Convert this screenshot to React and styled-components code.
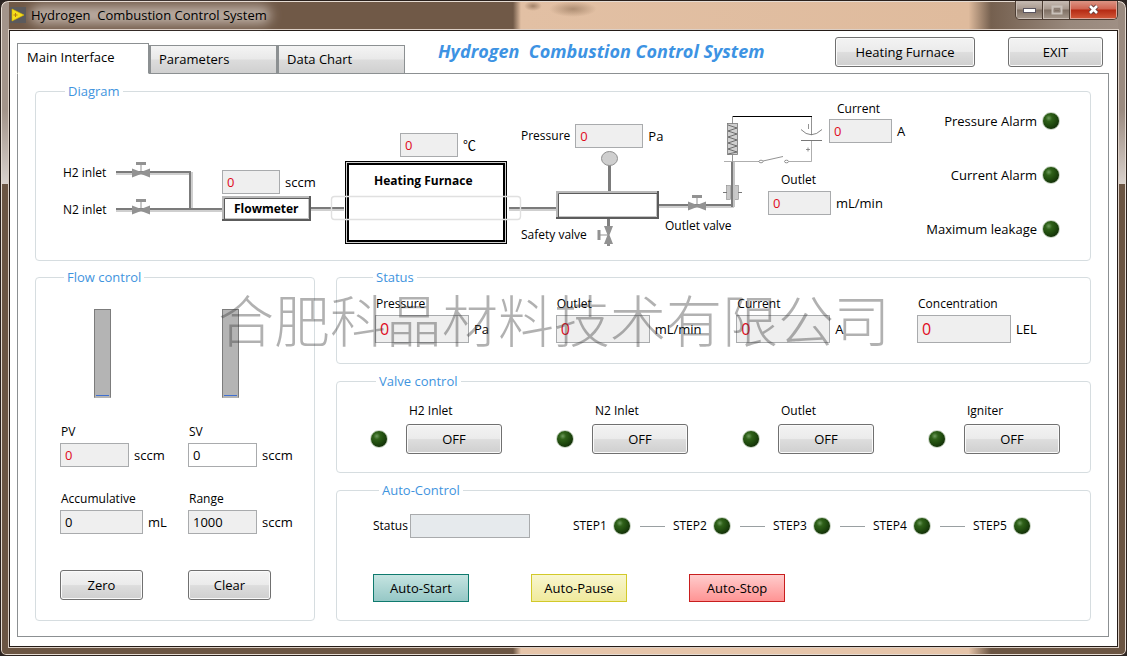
import React, { useState } from "react";
import styled, { createGlobalStyle, css } from "styled-components";

const GlobalStyle = createGlobalStyle`
  *, *::before, *::after { box-sizing: border-box; }
  body {
    margin: 0;
    background: #2b2422;
    color: #000;
    font-family: "Open Sans", "Noto Sans CJK SC", sans-serif;
    font-size: 13px;
    line-height: 18px;
  }
  button, input { font: inherit; color: inherit; }
`;

/* ---------- window frame ---------- */

const Frame = styled.div`
  display: flex;
  flex-direction: column;
  min-width: 1127px;
  min-height: 100vh;
  padding: 0 8px 8px;
  border: 1px solid #2a211d;
  border-radius: 8px 8px 6px 6px;
  box-shadow: inset 0 0 0 1px #e6dcd3;
  background:
    radial-gradient(ellipse at center, rgba(120, 90, 66, 0.6), transparent 70%) 523px 0 / 18px 10px no-repeat,
    radial-gradient(ellipse at center, rgba(130, 100, 74, 0.55), transparent 70%) 548px 0 / 48px 16px no-repeat,
    linear-gradient(#a3948a, #a3948a 60%, #d9d1cc) 0 0 / 8px 183px no-repeat,
    linear-gradient(#9b8b80, #9b8b80 60%, #d9d1cc) 100% 0 / 8px 183px no-repeat,
    linear-gradient(90deg, #705947 0, #705947 512px, #e2c0a4 520px, #dfbb9d 86%, #75604f 88%, #98887c 95%, #a09085) 0 0 / 100% 30px no-repeat,
    linear-gradient(90deg, #6b5543 0, #6b5543 512px, #e6c5aa 520px, #e6c5aa 86%, #6b5543 88%);
`;

const TitleBar = styled.header`
  display: flex;
  align-items: flex-start;
  justify-content: space-between;
  height: 29px;
`;

const WindowTitle = styled.h1`
  position: relative;
  display: flex;
  align-items: center;
  gap: 5px;
  margin: 5px 0 0 1px;
  font-size: 13px;
  font-weight: 400;
  line-height: 18px;
  white-space: pre;
  isolation: isolate;
  &::before {
    content: "";
    position: absolute;
    inset: 0 -4px 0 20px;
    z-index: -1;
    border-radius: 9px;
    background: rgba(235, 228, 222, 0.62);
    filter: blur(6px);
  }
`;

const WindowButtons = styled.div`
  display: flex;
  border: 1px solid #4c3d33;
  border-top: 0;
  border-radius: 0 0 5px 5px;
  overflow: hidden;
`;

const WindowButton = styled.button`
  display: flex;
  align-items: center;
  justify-content: center;
  width: ${(p) => (p.$close ? 47 : 27)}px;
  height: 18px;
  padding: 0;
  border: 1px solid ${(p) => (p.$close ? "#e0a598" : "#cbbfb6")};
  border-top: 0;
  background: ${(p) =>
    p.$close
      ? "linear-gradient(#dc9484, #cf6350 48%, #b42913 52%, #cf5436)"
      : "linear-gradient(#c6bbb3, #a7988d 48%, #7f6f63 52%, #a29488)"};
  & + & { box-shadow: -1px 0 0 #4c3d33; }
`;

const Client = styled.main`
  display: flex;
  flex: 1;
  flex-direction: column;
  padding: 0 8px 9px 7px;
  border: 1px solid #241b17;
  outline: 1px solid #dccfc5;
  background: #fff;
`;

/* ---------- header with tabs ---------- */

const TopRow = styled.div`
  display: flex;
  align-items: center;
  height: 42px;
  padding-right: 6px;
`;

const TabList = styled.div`
  display: flex;
  align-items: flex-end;
  align-self: flex-end;
  margin-bottom: -1px;
`;

const Tab = styled.button`
  position: relative;
  width: 128px;
  height: 29px;
  padding: 0 8px 2px;
  border: 1px solid #8c9092;
  background: linear-gradient(#f4f4f4, #e9e9e9 48%, #dcdcdc 52%, #d0d0d0);
  text-align: left;
  & + & { border-left-width: 2px; }
  ${(p) =>
    p.$active &&
    css`
      width: 132px;
      height: 31px;
      padding: 0 9px 4px;
      border-bottom-color: #fff;
      background: #fff;
    `}
`;

const Heading = styled.h2`
  flex: 1;
  margin: 0 0 2px 33px;
  color: #3d93e3;
  font-size: 18px;
  font-style: italic;
  font-weight: 700;
  line-height: 24px;
  white-space: pre;
`;

const TopButtons = styled.div`
  display: flex;
  gap: 33px;
`;

const Button = styled.button`
  width: ${(p) => p.$width}px;
  height: 30px;
  padding: 0;
  border: 1px solid #707070;
  border-radius: 3px;
  box-shadow: inset 0 0 0 1px #fafafa;
  background: linear-gradient(#f3f3f3, #ebebeb 48%, #dddddd 52%, #cfcfcf);
`;

/* ---------- panels ---------- */

const Page = styled.section`
  display: flex;
  flex: 1;
  flex-direction: column;
  gap: 7px;
  padding: 8px 17px 15px;
  border: 1px solid #8c9092;
`;

const Group = styled.fieldset`
  min-width: 0;
  margin: 0;
  padding: 0;
  border: 1px solid #d6dde0;
  border-radius: 4px;
`;

const GroupTitle = styled.legend`
  margin-left: ${(p) => p.$indent}px;
  padding: 0 3px;
  color: #3f94de;
  line-height: 18px;
`;

const Panels = styled.div`
  position: relative;
  display: grid;
  grid-template-columns: 280fr 755fr;
  gap: 21px;
`;

const PanelStack = styled.div`
  display: flex;
  flex-direction: column;
  gap: 8px;
`;

const Watermark = styled.div`
  position: absolute;
  top: 20px;
  left: 183px;
  color: rgba(60, 60, 60, 0.4);
  font-family: "Noto Sans CJK SC", sans-serif;
  font-size: 56px;
  font-weight: 300;
  line-height: 60px;
  white-space: nowrap;
  pointer-events: none;
`;

const ValueBox = styled.input`
  width: ${(p) => p.$width}px;
  height: ${(p) => (p.$large ? 28 : 24)}px;
  padding: 0 0 0 4px;
  border: 1px solid #a9abad;
  border-radius: 0;
  outline: 0;
  background: ${(p) => p.$fill || "#efefef"};
  color: ${(p) => (p.$red ? "#e00b1c" : "#000")};
  font-size: ${(p) => (p.$large ? 16 : 13)}px;
`;

const FieldBlock = styled.div`
  display: flex;
  flex-direction: column;
  gap: 2px;
`;

const FieldLine = styled.div`
  display: flex;
  align-items: center;
  gap: 5px;
`;

const FieldLabel = styled.label`
  padding-left: 1px;
  font-size: 12px;
  white-space: nowrap;
`;

const Led = styled.span`
  flex: none;
  width: 18px;
  height: 18px;
  border: 1px solid #c9d5c4;
  border-radius: 50%;
  background: radial-gradient(circle at 36% 32%, #6d9a5c 0, #2f6119 22%, #1f4a0e 50%, #0f2706 85%);
`;

/* ---------- diagram ---------- */

const DiagramBody = styled.div`
  display: flex;
  justify-content: space-between;
`;

const Stage = styled.div`
  position: relative;
  flex: 1;
  height: 160px;
`;

const Drawing = styled.svg`
  position: absolute;
  top: 0;
  left: 0;
`;

const Node = styled.div`
  position: absolute;
  left: ${(p) => p.$x - 36}px;
  top: ${(p) => p.$y - 100}px;
  display: flex;
  align-items: center;
  gap: 5px;
  font-size: 12px;
  font-weight: ${(p) => (p.$bold ? 700 : 400)};
  white-space: nowrap;
`;

const Unit = styled.span`
  font-size: 13px;
`;

const AlarmList = styled.ul`
  display: flex;
  flex-direction: column;
  gap: 36px;
  margin: 0;
  padding: 12px 30px 0 0;
  list-style: none;
`;

const Alarm = styled.li`
  display: flex;
  align-items: center;
  justify-content: flex-end;
  gap: 5px;
`;

/* ---------- flow control ---------- */

const FlowBody = styled.div`
  display: flex;
  flex-direction: column;
  padding: 23px 0 20px 24px;
`;

const PairRow = styled.div`
  display: grid;
  grid-template-columns: 128px 1fr;
  margin-top: ${(p) => p.$space || 0}px;
`;

const Gauge = styled.div`
  display: flex;
  align-items: flex-end;
  width: 17px;
  height: 89px;
  margin-left: 34px;
  padding: 0 1px 1px;
  border: 1px solid #7c7c7c;
  border-bottom-color: #b4b4b4;
  background: #b4b4b4;
`;

const GaugeLevel = styled.span`
  flex: 1;
  height: 1px;
  background: #3f6fd0;
`;

/* ---------- status, valves, automation ---------- */

const StatusBody = styled.div`
  display: grid;
  grid-template-columns: 1fr 1fr 1fr 122px;
  padding: 9px 51px 20px 38px;
`;

const ValveBody = styled.div`
  display: grid;
  grid-template-columns: 1fr 1fr 1fr 132px;
  padding: 12px 30px 18px 33px;
`;

const ValveItem = styled.div`
  display: grid;
  grid-template-columns: 18px 96px;
  align-items: center;
  gap: 4px 18px;
`;

const ValveName = styled.span`
  grid-column: 2;
  padding-left: 3px;
  font-size: 12px;
`;

const AutoBody = styled.div`
  display: flex;
  flex-direction: column;
  gap: 36px;
  padding: 15px 36px 18px;
`;

const AutoRow = styled.div`
  display: flex;
  align-items: center;
  gap: ${(p) => p.$gap}px;
`;

const AutoLabel = styled.label`
  font-size: 12px;
`;

const Steps = styled.ol`
  display: flex;
  margin: 0 0 0 41px;
  padding: 0;
  list-style: none;
`;

const Step = styled.li`
  display: flex;
  align-items: center;
  gap: 4px;
  &:not(:last-child) { width: 100px; }
  &:not(:last-child)::after {
    content: "";
    width: 25px;
    height: 1px;
    margin-left: 5px;
    background: #9aa0a2;
  }
`;

const StepName = styled.span`
  width: 36px;
  font-size: 12px;
`;

const autoTones = {
  start: ["#0f7a6e", "#c5e4e1", "#96c8c6"],
  pause: ["#d2c92a", "#f8f6cf", "#f0ea9c"],
  stop: ["#c81e1e", "#ffcccc", "#ff9494"],
};

const AutoButton = styled.button`
  width: 96px;
  height: 28px;
  padding: 0;
  border: 1px solid ${(p) => autoTones[p.$tone][0]};
  background: linear-gradient(${(p) => autoTones[p.$tone][1]}, ${(p) => autoTones[p.$tone][2]});
`;

/* ---------- pieces ---------- */

function AppIcon() {
  return (
    <svg width="16" height="16" viewBox="0 0 16 16" aria-hidden="true">
      <rect width="16" height="16" fill="#5b5a5c" />
      <path d="M2 2 L14 8 L2 14 Z" fill="#f5df1c" stroke="#d9b400" strokeWidth="0.6" />
      <path d="M3.5 8 h4 M5.5 6 v4" stroke="#b67a12" strokeWidth="1" />
    </svg>
  );
}

function Pipe({ x1, x2, y }) {
  return (
    <g>
      <rect x={x1} y={y} width={x2 - x1} height="2" fill="#7b7b7b" />
      <rect x={x1} y={y + 2} width={x2 - x1} height="2" fill="#cfcfcf" />
    </g>
  );
}

function Valve({ x, y, turn = 0 }) {
  return (
    <g transform={`translate(${x} ${y}) rotate(${turn})`} fill="#929292">
      <path d="M-9 -4.5 L0 -1 L9 -4.5 V4.5 L0 1 L-9 4.5 Z" />
      <rect x="-0.5" y="-9" width="1" height="9" />
      <rect x="-5" y="-11" width="10" height="3" />
    </g>
  );
}

function BeveledBox({ x, y, width, height }) {
  const r = x + width;
  const b = y + height;
  return (
    <g fill="none">
      <rect x={x} y={y} width={width} height={height} fill="#fff" />
      <path d={`M${x + 1} ${b} V${y + 1} H${r}`} stroke="#b9b9b9" strokeWidth="2" />
      <path d={`M${x} ${b - 1} H${r - 1} V${y}`} stroke="#5c5c5c" strokeWidth="2" />
      <path d={`M${x + 2.5} ${b - 2} V${y + 2.5} H${r - 2}`} stroke="#5c5c5c" />
      <path d={`M${x + 3} ${b - 2.5} H${r - 2.5} V${y + 3}`} stroke="#c4c4c4" />
    </g>
  );
}

function Plumbing() {
  return (
    <Drawing width="890" height="160" viewBox="36 100 890 160" aria-hidden="true">
      <Pipe x1={116} x2={191} y={171} />
      <Pipe x1={116} x2={222} y={208} />
      <rect x="189" y="171" width="2" height="38" fill="#7b7b7b" />
      <rect x="191" y="172" width="2" height="36" fill="#cfcfcf" />
      <Valve x={141} y={173} />
      <Valve x={141} y={210} />
      <BeveledBox x={222} y={196} width={89} height={25} />
      <Pipe x1={311} x2={344} y={207} />

      <rect x="345.5" y="161.5" width="161" height="82" fill="#fff" stroke="#000" />
      <rect x="346.5" y="162.5" width="159" height="80" fill="none" stroke="#d0d0d0" />
      <rect x="348" y="164" width="156" height="77" fill="none" stroke="#000" strokeWidth="2" />
      <Pipe x1={509} x2={556} y={207} />
      <rect x="331.5" y="196.5" width="189" height="23" rx="3" fill="none" stroke="#e0e0e0" strokeWidth="1.4" />

      <rect x="608" y="165" width="3" height="27" fill="#7b7b7b" />
      <ellipse cx="609.5" cy="158.5" rx="8" ry="7" fill="#cfcfcf" stroke="#8f8f8f" />
      <BeveledBox x={556} y={191} width={103} height={28} />
      <rect x="607" y="219" width="3" height="9" fill="#7f7f7f" />
      <rect x="607" y="242" width="3" height="4" fill="#8c8c8c" />
      <Valve x={608.5} y={235} turn={-90} />

      <Pipe x1={659} x2={734} y={204} />
      <Valve x={697} y={206} />
      <g fill="#c9c9c9" stroke="#8b8b8b" strokeWidth="0.6">
        <rect x="726.5" y="185.5" width="4" height="14" />
        <rect x="734.5" y="185.5" width="4" height="14" />
      </g>
      <path d="M723 192.5 h4 M738 192.5 h4" stroke="#777" />
      <rect x="731" y="162" width="2" height="45" fill="#7b7b7b" />
      <rect x="733" y="162" width="2" height="45" fill="#c4c4c4" />

      <g fill="none" stroke="#777" strokeWidth="0.8">
        <path d="M732.5 116 V124 M732.5 155 V162" />
        <rect x="727.5" y="123.5" width="10" height="31" fill="#cfcfcf" />
        <path d="M728 125 L737 128 L728 131 L737 134 L728 137 L737 140 L728 143 L737 146 L728 149 L737 152 L728 154" stroke="#555" />
        <path d="M724 161.5 H759" stroke="#999" />
        <ellipse cx="761" cy="161.5" rx="2" ry="1.3" />
        <ellipse cx="786.5" cy="161.5" rx="2" ry="1.3" />
        <path d="M763 161 L783 156.5" />
        <path d="M789 161.5 H811.5 V141" stroke="#999" />
        <path d="M811.5 116 V135" />
        <path d="M801 129.5 Q811 140 822 129.5" stroke="#666" />
        <path d="M801 140.5 H822" stroke="#555" />
        <path d="M806 149.5 h4 M808 147.5 v4 M808.5 124 v5" />
      </g>
      <path d="M733 116.5 H812" stroke="#000" />
    </Drawing>
  );
}

function Reading({ x, y, id, name, width, unit, lead }) {
  return (
    <Node $x={x} $y={y}>
      {lead && <label htmlFor={id}>{lead}</label>}
      <ValueBox id={id} aria-label={lead ? undefined : name} $width={width} $red defaultValue="0" readOnly />
      <Unit>{unit}</Unit>
    </Node>
  );
}

function Field({ id, label, unit, value = "0", width, red, fill, large, editable }) {
  return (
    <FieldBlock>
      <FieldLabel htmlFor={id}>{label}</FieldLabel>
      <FieldLine>
        <ValueBox id={id} $width={width} $red={red} $fill={fill} $large={large} defaultValue={value} readOnly={!editable} />
        <Unit>{unit}</Unit>
      </FieldLine>
    </FieldBlock>
  );
}

const tabs = ["Main Interface", "Parameters", "Data Chart"];
const alarms = ["Pressure Alarm", "Current Alarm", "Maximum leakage"];
const valves = ["H2 Inlet", "N2 Inlet", "Outlet", "Igniter"];
const steps = ["STEP1", "STEP2", "STEP3", "STEP4", "STEP5"];
const readings = [
  ["Pressure", "Pa"],
  ["Outlet", "mL/min"],
  ["Current", "A"],
  ["Concentration", "LEL"],
];

export default function App() {
  const [open, setOpen] = useState({});

  return (
    <>
      <GlobalStyle />
      <Frame>
        <TitleBar>
          <WindowTitle>
            <AppIcon />
            {"Hydrogen  Combustion Control System"}
          </WindowTitle>
          <WindowButtons>
            <WindowButton aria-label="Minimize">
              <svg width="13" height="6" viewBox="0 0 13 6">
                <rect x="0.5" y="1.5" width="12" height="4" fill="#fff" stroke="#5a5560" />
              </svg>
            </WindowButton>
            <WindowButton aria-label="Maximize">
              <svg width="12" height="10" viewBox="0 0 12 10">
                <rect x="1.5" y="1.5" width="9" height="7" fill="none" stroke="#c9c1ba" strokeWidth="2" />
                <rect x="3.5" y="3.5" width="5" height="3" fill="none" stroke="#8d8076" />
              </svg>
            </WindowButton>
            <WindowButton $close aria-label="Close">
              <svg width="13" height="11" viewBox="0 0 13 11">
                <path d="M3 2 L10 9 M10 2 L3 9" stroke="#5d3a3a" strokeWidth="4.4" />
                <path d="M3 2 L10 9 M10 2 L3 9" stroke="#fff" strokeWidth="2.6" />
              </svg>
            </WindowButton>
          </WindowButtons>
        </TitleBar>

        <Client>
          <TopRow>
            <TabList role="tablist">
              {tabs.map((name, i) => (
                <Tab key={name} role="tab" aria-selected={i === 0} $active={i === 0}>
                  {name}
                </Tab>
              ))}
            </TabList>
            <Heading>{"Hydrogen  Combustion Control System"}</Heading>
            <TopButtons>
              <Button $width={140}>Heating Furnace</Button>
              <Button $width={95}>EXIT</Button>
            </TopButtons>
          </TopRow>

          <Page>
            <Group>
              <GroupTitle $indent={29}>Diagram</GroupTitle>
              <DiagramBody>
                <Stage>
                  <Plumbing />
                  <Node $x={63} $y={164}>H2 inlet</Node>
                  <Node $x={63} $y={201}>N2 inlet</Node>
                  <Reading x={222} y={170} id="d-flow" name="Flow" width={58} unit="sccm" />
                  <Node $x={234} $y={200} $bold>Flowmeter</Node>
                  <Reading x={400} y={133} id="d-temp" name="Temperature" width={58} unit="℃" />
                  <Node $x={374} $y={172} $bold>Heating Furnace</Node>
                  <Reading x={521} y={124} id="d-press" lead="Pressure" width={68} unit="Pa" />
                  <Node $x={521} $y={226}>Safety valve</Node>
                  <Node $x={665} $y={217}>Outlet valve</Node>
                  <Node $x={837} $y={100}>Current</Node>
                  <Reading x={829} y={119} id="d-current" name="Current" width={63} unit="A" />
                  <Node $x={781} $y={171}>Outlet</Node>
                  <Reading x={768} y={191} id="d-outlet" name="Outlet" width={63} unit="mL/min" />
                </Stage>
                <AlarmList>
                  {alarms.map((name) => (
                    <Alarm key={name}>
                      {name}
                      <Led />
                    </Alarm>
                  ))}
                </AlarmList>
              </DiagramBody>
            </Group>

            <Panels>
              <Group>
                <GroupTitle $indent={28}>Flow control</GroupTitle>
                <FlowBody>
                  <PairRow>
                    <Gauge><GaugeLevel /></Gauge>
                    <Gauge><GaugeLevel /></Gauge>
                  </PairRow>
                  <PairRow $space={25}>
                    <Field id="pv" label="PV" unit="sccm" width={69} red />
                    <Field id="sv" label="SV" unit="sccm" width={69} fill="#fff" editable />
                  </PairRow>
                  <PairRow $space={23}>
                    <Field id="acc" label="Accumulative" unit="mL" width={83} />
                    <Field id="range" label="Range" unit="sccm" value="1000" width={69} />
                  </PairRow>
                  <PairRow $space={36}>
                    <Button $width={83}>Zero</Button>
                    <Button $width={83}>Clear</Button>
                  </PairRow>
                </FlowBody>
              </Group>

              <PanelStack>
                <Group>
                  <GroupTitle $indent={36}>Status</GroupTitle>
                  <StatusBody>
                    {readings.map(([label, unit]) => (
                      <Field key={label} id={`s-${label}`} label={label} unit={unit} width={94} red large />
                    ))}
                  </StatusBody>
                </Group>

                <Group>
                  <GroupTitle $indent={39}>Valve control</GroupTitle>
                  <ValveBody>
                    {valves.map((name) => (
                      <ValveItem key={name}>
                        <ValveName>{name}</ValveName>
                        <Led />
                        <Button
                          $width={96}
                          aria-label={name}
                          aria-pressed={!!open[name]}
                          onClick={() => setOpen({ ...open, [name]: !open[name] })}
                        >
                          {open[name] ? "ON" : "OFF"}
                        </Button>
                      </ValveItem>
                    ))}
                  </ValveBody>
                </Group>

                <Group>
                  <GroupTitle $indent={42}>Auto-Control</GroupTitle>
                  <AutoBody>
                    <AutoRow $gap={2}>
                      <AutoLabel htmlFor="auto-status">Status</AutoLabel>
                      <ValueBox id="auto-status" $width={120} $fill="#e6eaed" readOnly />
                      <Steps>
                        {steps.map((name) => (
                          <Step key={name}>
                            <StepName>{name}</StepName>
                            <Led />
                          </Step>
                        ))}
                      </Steps>
                    </AutoRow>
                    <AutoRow $gap={62}>
                      <AutoButton $tone="start">Auto-Start</AutoButton>
                      <AutoButton $tone="pause">Auto-Pause</AutoButton>
                      <AutoButton $tone="stop">Auto-Stop</AutoButton>
                    </AutoRow>
                  </AutoBody>
                </Group>
              </PanelStack>

              <Watermark>合肥科晶材料技术有限公司</Watermark>
            </Panels>
          </Page>
        </Client>
      </Frame>
    </>
  );
}
